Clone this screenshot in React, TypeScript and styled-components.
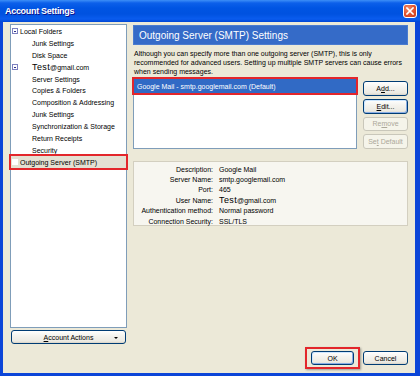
import React from "react";
import styled, { createGlobalStyle } from "styled-components";

const GlobalStyle = createGlobalStyle`
  html, body { margin: 0; padding: 0; background: #ffffff; }
  body { font-family: "Liberation Sans", Arial, sans-serif; color: #000; }
  * { box-sizing: border-box; }
`;

const Window = styled.div`
  width: 420px;
  height: 376px;
  display: flex;
  flex-direction: column;
  background: #0b45d8;
  overflow: hidden;
`;

const TitleBar = styled.div`
  height: 22px;
  flex: none;
  display: flex;
  align-items: center;
  justify-content: space-between;
  padding: 0 3px 0 5px;
  background: linear-gradient(
    180deg,
    #3d8ff7 0px,
    #0c60ea 3px,
    #0055e3 8px,
    #0052e0 14px,
    #0a5cee 19px,
    #0046d5 22px
  );
`;

const Title = styled.span`
  color: #fff;
  font-weight: bold;
  font-size: 9px;
  letter-spacing: -0.3px;
  text-shadow: 1px 1px #0f1089;
`;

const CloseButton = styled.div`
  width: 14px;
  height: 14px;
  border: 1px solid #fff;
  border-radius: 3px;
  background: radial-gradient(circle at 35% 30%, #f08a66 0%, #e0512e 55%, #c43d1c 100%);
  display: flex;
  align-items: center;
  justify-content: center;
`;

const Body = styled.div`
  flex: 1;
  margin: 0 5px 3px 3px;
  background: #ece9d8;
  display: flex;
  flex-direction: column;
  padding: 2px 7px 4px 7px;
`;

const Main = styled.div`
  flex: 1;
  display: flex;
  gap: 6px;
  min-height: 0;
`;

const LeftColumn = styled.div`
  width: 117px;
  display: flex;
  flex-direction: column;
`;

const Tree = styled.div`
  flex: 1;
  background: #fff;
  border: 1px solid #7f9db9;
  padding-top: 0.5px;
`;

const TreeRow = styled.div<{ $selected?: boolean }>`
  height: 11.9px;
  display: flex;
  align-items: center;
  padding-left: 1px;
  font-size: 7px;
  white-space: nowrap;
  background: ${(p) => (p.$selected ? "#e4e1d3" : "transparent")};
  outline: ${(p) => (p.$selected ? "2px solid #e3262b" : "none")};
`;

const Expander = styled.span<{ $visible: boolean }>`
  width: 6px;
  height: 6px;
  flex: none;
  border: ${(p) => (p.$visible ? "1px solid #7d81c0" : "none")};
  background: #fff;
  display: flex;
  align-items: center;
  justify-content: center;
  &::after {
    content: "";
    display: ${(p) => (p.$visible ? "block" : "none")};
    width: 2px;
    height: 1px;
    background: #2b2f8a;
  }
`;

const TreeLabel = styled.span<{ $indent: number }>`
  margin-left: ${(p) => p.$indent}px;
`;

const BigTest = styled.span`
  font-size: 9px;
  letter-spacing: 0.4px;
`;

const XPButton = styled.button<{ $focused?: boolean }>`
  font-family: "Liberation Sans", Arial, sans-serif;
  font-size: 7px;
  color: #000;
  height: 14px;
  padding: 0;
  border: 1px solid #003c74;
  border-radius: 3px;
  background: linear-gradient(180deg, #ffffff 0%, #f4f3ee 40%, #eceae2 85%, #d8d2c6 100%);
  box-shadow: ${(p) =>
    p.$focused ? "inset 1px 1px 0 #cee7ff, inset -1px -1px 0 #89ade4" : "none"};
  display: flex;
  align-items: center;
  justify-content: center;
  &:disabled {
    color: #aca899;
    border-color: #c9c7ba;
    background: #f5f4ea;
  }
`;

const AccountActions = styled(XPButton)`
  margin: 2px 1px 0 1px;
  position: relative;
`;

const DropArrow = styled.span`
  position: absolute;
  right: 7px;
  top: 6px;
  width: 0;
  height: 0;
  border-left: 2px solid transparent;
  border-right: 2px solid transparent;
  border-top: 2px solid #000;
`;

const RightColumn = styled.div`
  flex: 1;
  display: flex;
  flex-direction: column;
  padding-top: 1px;
`;

const HeaderBar = styled.div`
  height: 20px;
  background: #356bc8;
  border: 1px solid #4a7bcf;
  color: #fff;
  font-size: 10px;
  display: flex;
  align-items: center;
  padding-left: 5px;
`;

const Description = styled.p`
  margin: 3.5px 0 0 0;
  font-size: 7px;
  line-height: 9px;
  white-space: nowrap;
  padding-left: 1px;
`;

const ListArea = styled.div`
  margin-top: 1.5px;
  display: flex;
  gap: 6px;
  height: 72px;
`;

const ListBox = styled.div`
  flex: 1;
  background: #fff;
  border: 1px solid #7f9db9;
  padding: 1px 0 0 0;
`;

const ListItem = styled.div<{ $selected?: boolean }>`
  height: 14px;
  display: flex;
  align-items: center;
  padding-left: 3px;
  font-size: 7px;
  color: ${(p) => (p.$selected ? "#fff" : "#000")};
  background: ${(p) => (p.$selected ? "#316ac5" : "transparent")};
  outline: ${(p) => (p.$selected ? "2px solid #e3262b" : "none")};
`;

const ButtonStack = styled.div`
  width: 45px;
  display: flex;
  flex-direction: column;
  gap: 3px;
  padding-top: 4px;
  & > button {
    height: 15px;
  }
`;

const Details = styled.div`
  margin-top: 12px;
  height: 65px;
  background: #f7f6f0;
  border: 1px solid #d3cfc0;
  display: grid;
  grid-template-columns: 79px 1fr;
  column-gap: 6px;
  grid-auto-rows: 10.4px;
  align-items: center;
  padding-top: 2px;
  font-size: 7px;
`;

const DetailLabel = styled.span`
  text-align: right;
  white-space: nowrap;
`;

const DetailValue = styled.span`
  white-space: nowrap;
`;

const Footer = styled.div`
  margin-top: 3px;
  height: 22px;
  display: flex;
  justify-content: flex-end;
  align-items: center;
  gap: 3px;
`;

const RedFrame = styled.div`
  border: 2px solid #e3262b;
  padding: 2px 4px;
  box-shadow: 1px 1px 2px rgba(0, 0, 0, 0.35);
  display: flex;
`;

const DialogButton = styled(XPButton)<{ $w: number }>`
  width: ${(p) => p.$w}px;
`;

const U = styled.span`
  text-decoration: underline;
`;

type TreeItem = {
  label: React.ReactNode;
  expander: boolean;
  indent: number;
  selected?: boolean;
};

const treeItems: TreeItem[] = [
  { label: "Local Folders", expander: true, indent: 2 },
  { label: "Junk Settings", expander: false, indent: 14 },
  { label: "Disk Space", expander: false, indent: 14 },
  {
    label: (
      <>
        <BigTest>Test</BigTest>@gmail.com
      </>
    ),
    expander: true,
    indent: 14,
  },
  { label: "Server Settings", expander: false, indent: 14 },
  { label: "Copies & Folders", expander: false, indent: 14 },
  { label: "Composition & Addressing", expander: false, indent: 14 },
  { label: "Junk Settings", expander: false, indent: 14 },
  { label: "Synchronization & Storage", expander: false, indent: 14 },
  { label: "Return Receipts", expander: false, indent: 14 },
  { label: "Security", expander: false, indent: 14 },
  { label: "Outgoing Server (SMTP)", expander: false, indent: 2, selected: true },
];

const details: [string, React.ReactNode][] = [
  ["Description:", "Google Mail"],
  ["Server Name:", "smtp.googlemail.com"],
  ["Port:", "465"],
  [
    "User Name:",
    <>
      <BigTest>Test</BigTest>@gmail.com
    </>,
  ],
  ["Authentication method:", "Normal password"],
  ["Connection Security:", "SSL/TLS"],
];

export default function App() {
  return (
    <>
      <GlobalStyle />
      <Window>
        <TitleBar>
          <Title>Account Settings</Title>
          <CloseButton>
            <svg width="8" height="8" viewBox="0 0 8 8">
              <path d="M1 1 L7 7 M7 1 L1 7" stroke="#fff" strokeWidth="1.6" strokeLinecap="square" />
            </svg>
          </CloseButton>
        </TitleBar>
        <Body>
          <Main>
            <LeftColumn>
              <Tree>
                {treeItems.map((item, i) => (
                  <TreeRow key={i} $selected={item.selected}>
                    <Expander $visible={item.expander} />
                    <TreeLabel $indent={item.indent}>{item.label}</TreeLabel>
                  </TreeRow>
                ))}
              </Tree>
              <AccountActions>
                <span>
                  <U>A</U>ccount Actions
                </span>
                <DropArrow />
              </AccountActions>
            </LeftColumn>
            <RightColumn>
              <HeaderBar>Outgoing Server (SMTP) Settings</HeaderBar>
              <Description>
                Although you can specify more than one outgoing server (SMTP), this is only
                <br />
                recommended for advanced users. Setting up multiple SMTP servers can cause errors
                <br />
                when sending messages.
              </Description>
              <ListArea>
                <ListBox>
                  <ListItem $selected>Google Mail - smtp.googlemail.com (Default)</ListItem>
                </ListBox>
                <ButtonStack>
                  <XPButton>
                    <span>
                      A<U>d</U>d...
                    </span>
                  </XPButton>
                  <XPButton $focused>
                    <span>
                      <U>E</U>dit...
                    </span>
                  </XPButton>
                  <XPButton disabled>
                    <span>
                      Re<U>m</U>ove
                    </span>
                  </XPButton>
                  <XPButton disabled>
                    <span>
                      Se<U>t</U> Default
                    </span>
                  </XPButton>
                </ButtonStack>
              </ListArea>
              <Details>
                {details.map(([label, value], i) => (
                  <React.Fragment key={i}>
                    <DetailLabel>{label}</DetailLabel>
                    <DetailValue>{value}</DetailValue>
                  </React.Fragment>
                ))}
              </Details>
            </RightColumn>
          </Main>
          <Footer>
            <RedFrame>
              <DialogButton $w={43} $focused>
                OK
              </DialogButton>
            </RedFrame>
            <DialogButton $w={45}>Cancel</DialogButton>
          </Footer>
        </Body>
      </Window>
    </>
  );
}
